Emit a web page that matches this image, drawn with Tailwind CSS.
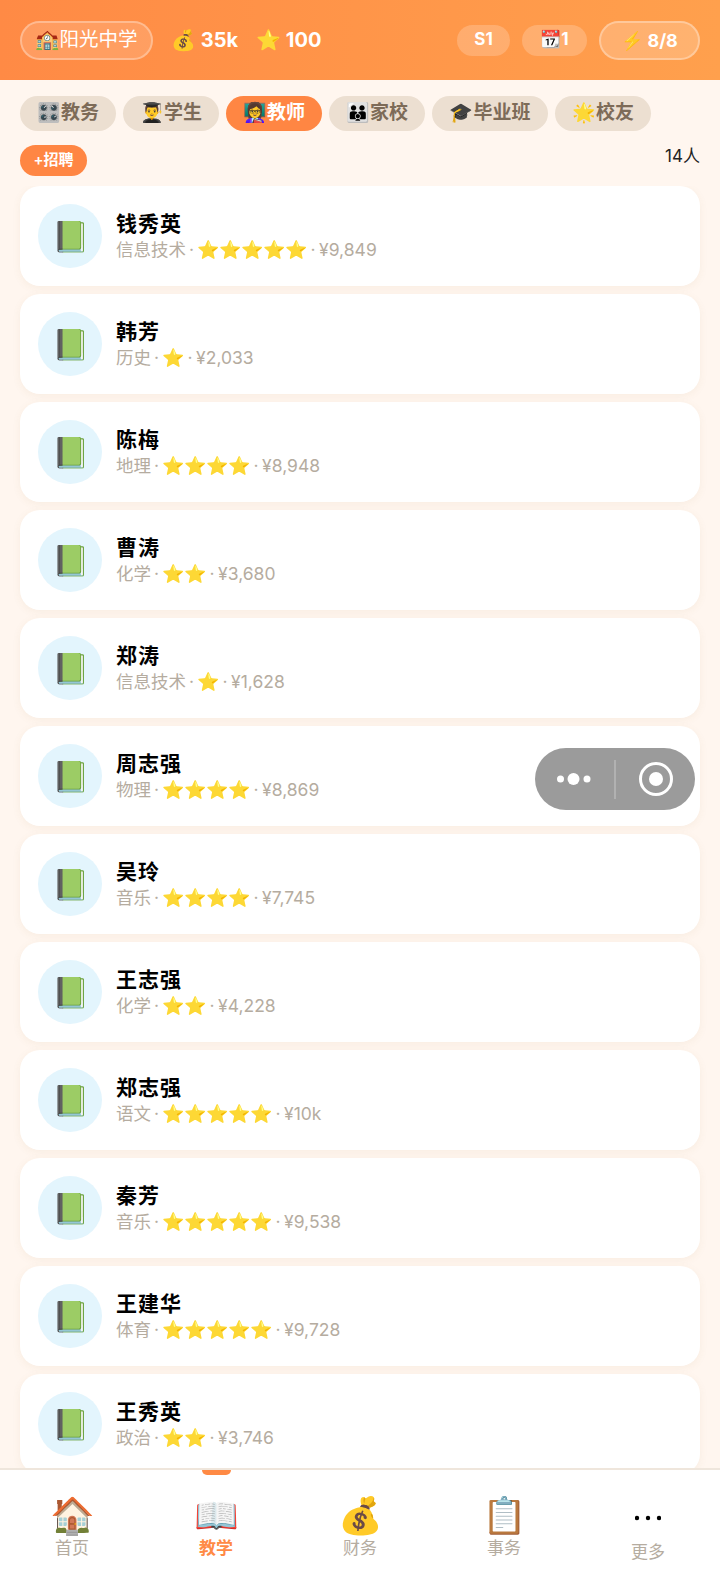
<!DOCTYPE html>
<html>
<head>
<meta charset="utf-8">
<script src="https://cdn.jsdelivr.net/npm/@tailwindcss/browser@4"></script>
</head>
<body class="bg-[#fff6ef] font-['Inter','Noto_Sans_CJK_SC',sans-serif] w-[720px] h-[1584px] overflow-hidden relative flex flex-col">
    <div class="h-[80px] shrink-0 bg-gradient-to-r from-[#ff8a45] to-[#ffa04d] flex items-center px-5 text-white">
        <div class="h-[39px] w-[133px] rounded-full border-2 border-white/30 bg-white/15 flex items-center justify-center text-[19.5px]">🏫阳光中学</div>
        <div class="ml-[18px] text-[20px] font-bold">💰 35k</div>
        <div class="ml-[18px] text-[20px] font-bold">⭐ 100</div>
        <div class="ml-auto h-[31px] w-[53px] rounded-full bg-white/20 flex items-center justify-center text-[17px] font-bold">S1</div>
        <div class="ml-3 h-[31px] w-[65px] rounded-full bg-white/20 flex items-center justify-center text-[17px] font-bold">📆1</div>
        <div class="ml-3 h-[39px] w-[101px] rounded-full border-2 border-white/30 bg-white/20 flex items-center justify-center text-[18px] font-bold">⚡ 8/8</div>
    </div>

    <div class="flex gap-[7px] px-5 mt-4 shrink-0 text-[19px] font-semibold text-[#7d6b58]">
        <div class="h-[35px] w-[96px] rounded-full bg-[#ecdfd1] flex items-center justify-center">🎛️教务</div>
        <div class="h-[35px] w-[96px] rounded-full bg-[#ecdfd1] flex items-center justify-center">👨‍🎓学生</div>
        <div class="h-[35px] w-[96px] rounded-full bg-[#ff8643] text-white flex items-center justify-center">👩‍🏫教师</div>
        <div class="h-[35px] w-[96px] rounded-full bg-[#ecdfd1] flex items-center justify-center">👪家校</div>
        <div class="h-[35px] w-[116px] rounded-full bg-[#ecdfd1] flex items-center justify-center">🎓毕业班</div>
        <div class="h-[35px] w-[96px] rounded-full bg-[#ecdfd1] flex items-center justify-center">🌟校友</div>
    </div>

    <div class="flex justify-between items-start px-5 mt-[14px] h-[41px] shrink-0">
        <div class="h-[31px] w-[67px] rounded-full bg-[#ff8643] text-white text-[15px] font-semibold flex items-center justify-center">+招聘</div>
        <div class="text-[17px] text-[#222] leading-[22px]">14人</div>
    </div>

    <div id="list" class="flex-1 min-h-0 overflow-hidden px-5 flex flex-col gap-2"></div>

    <div class="h-[116px] shrink-0 bg-white border-t-2 border-[#efe6dc] flex relative text-[17px] text-[#b5aca0]">
        <div class="absolute left-[202px] top-0 w-[29px] h-[5px] rounded-b-md bg-[#ff8a45]"></div>
        <div class="flex-1 flex flex-col items-center pt-[23px]"><span class="text-[36px] leading-[44px]">🏠</span><span class="leading-[22px]">首页</span></div>
        <div class="flex-1 flex flex-col items-center pt-[23px] text-[#ff8a45] font-semibold"><span class="text-[36px] leading-[44px]">📖</span><span class="leading-[22px]">教学</span></div>
        <div class="flex-1 flex flex-col items-center pt-[23px]"><span class="text-[36px] leading-[44px]">💰</span><span class="leading-[22px]">财务</span></div>
        <div class="flex-1 flex flex-col items-center pt-[23px]"><span class="text-[36px] leading-[44px]">📋</span><span class="leading-[22px]">事务</span></div>
        <div class="flex-1 flex flex-col items-center pt-[21px]">
            <svg width="26" height="48" viewBox="0 0 26 48"><circle cx="2" cy="27" r="2.2" fill="#000"/><circle cx="13" cy="27" r="2.2" fill="#000"/><circle cx="24" cy="27" r="2.2" fill="#000"/></svg>
            <span class="leading-[22px] mt-[2px]">更多</span>
        </div>
    </div>

    <!-- capsule sits over the list -->
    <div class="absolute left-[535px] top-[748px] w-[160px] h-[62px] rounded-full bg-[#9b9b9b] flex items-center">
        <svg width="160" height="62" viewBox="0 0 160 62">
            <circle cx="25.5" cy="31" r="3.5" fill="#fff"/>
            <circle cx="38.5" cy="31" r="6" fill="#fff"/>
            <circle cx="52" cy="31" r="3.5" fill="#fff"/>
            <line x1="80" y1="12" x2="80" y2="51" stroke="#b8b8b8" stroke-width="1.5"/>
            <circle cx="121" cy="31" r="15.5" fill="none" stroke="#fff" stroke-width="3"/>
            <circle cx="121" cy="31" r="7" fill="#fff"/>
        </svg>
    </div>

    <script>
        const teachers = [
            ['钱秀英', '信息技术', 5, '¥9,849'],
            ['韩芳', '历史', 1, '¥2,033'],
            ['陈梅', '地理', 4, '¥8,948'],
            ['曹涛', '化学', 2, '¥3,680'],
            ['郑涛', '信息技术', 1, '¥1,628'],
            ['周志强', '物理', 4, '¥8,869'],
            ['吴玲', '音乐', 4, '¥7,745'],
            ['王志强', '化学', 2, '¥4,228'],
            ['郑志强', '语文', 5, '¥10k'],
            ['秦芳', '音乐', 5, '¥9,538'],
            ['王建华', '体育', 5, '¥9,728'],
            ['王秀英', '政治', 2, '¥3,746'],
        ];
        document.getElementById('list').innerHTML = teachers.map(t => `
            <div class="h-[100px] shrink-0 bg-white rounded-[20px] shadow-[0_2px_8px_rgba(160,110,60,0.07)] flex items-center pl-[18px]">
                <div class="w-16 h-16 rounded-full bg-[#e3f5fd] flex items-center justify-center text-[30px]">📗</div>
                <div class="ml-[14px]">
                    <div class="text-[21px] font-semibold text-black leading-[26px] tracking-[1px]">${t[0]}</div>
                    <div class="text-[17.5px] text-[#b5aca0] leading-[24px] mt-px">${t[1]}<span class="mx-[3px]">·</span><span class="text-[18px]">${'⭐'.repeat(t[2])}</span><span class="mx-[3.5px]">·</span>${t[3]}</div>
                </div>
            </div>`).join('');
    </script>
</body>
</html>
